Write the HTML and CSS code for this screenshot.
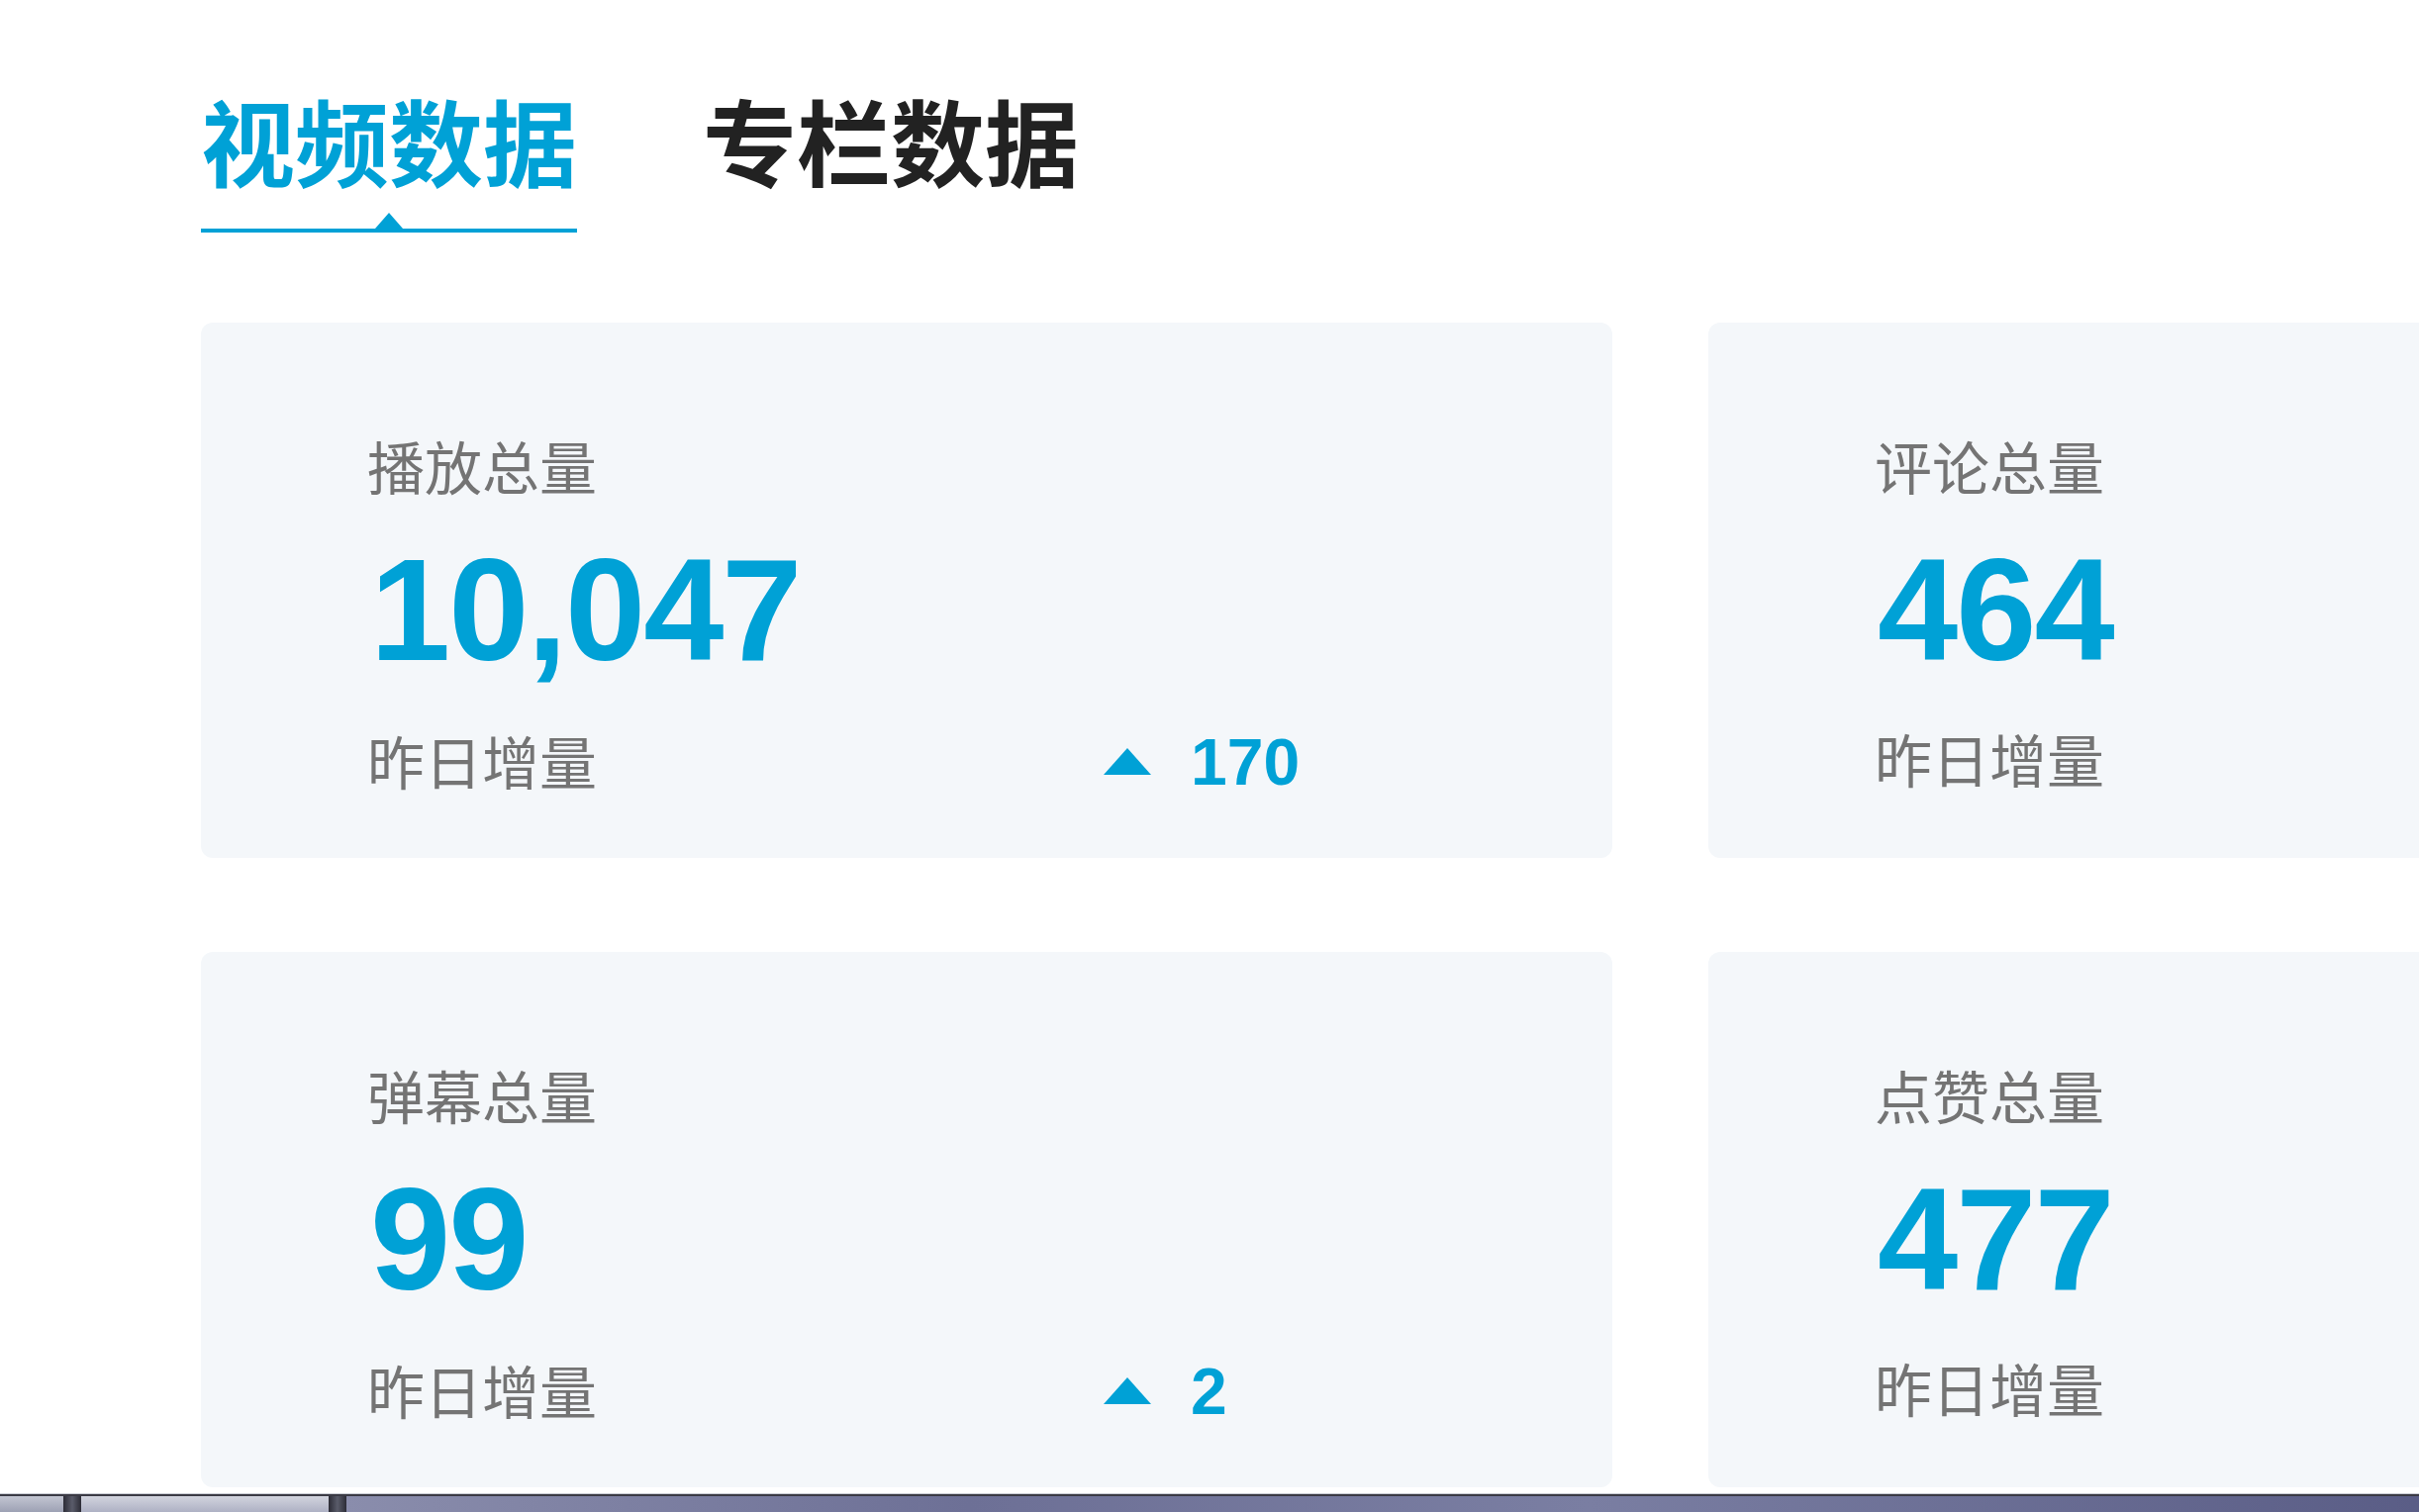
FILE: index.html
```html
<!DOCTYPE html>
<html lang="zh-CN">
<head>
<meta charset="utf-8">
<title>数据</title>
<link rel="stylesheet" href="styles.css">
</head>
<body>
<div class="page">
  <main class="content">
    <nav class="tabs">
      <div class="tab active">视频数据</div>
      <div class="tab">专栏数据</div>
    </nav>
    <section class="grid">
      <div class="card">
        <div class="label">播放总量</div>
        <div class="num">10,047</div>
        <div class="inc"><span class="inc-label">昨日增量</span><span class="tri"></span><span class="inc-val">170</span></div>
      </div>
      <div class="card">
        <div class="label">评论总量</div>
        <div class="num">464</div>
        <div class="inc"><span class="inc-label">昨日增量</span></div>
      </div>
      <div class="card">
        <div class="label">弹幕总量</div>
        <div class="num">99</div>
        <div class="inc"><span class="inc-label">昨日增量</span><span class="tri"></span><span class="inc-val">2</span></div>
      </div>
      <div class="card">
        <div class="label">点赞总量</div>
        <div class="num">477</div>
        <div class="inc"><span class="inc-label">昨日增量</span></div>
      </div>
    </section>
  </main>
  <div class="taskbar">
    <div class="tb-seg tb-a"></div>
    <div class="tb-sep"></div>
    <div class="tb-seg tb-b"></div>
    <div class="tb-sep"></div>
    <div class="tb-seg tb-c"></div>
  </div>
</div>
</body>
</html>
```
FILE: styles.css
```css
html, body {
  margin: 0;
  padding: 0;
  background: #ffffff;
}
body {
  font-family: "Noto Sans CJK SC", "Liberation Sans", sans-serif;
  overflow: hidden;
}
.page {
  width: 2444px;
  height: 1528px;
  display: flex;
  flex-direction: column;
  overflow: hidden;
}
.content {
  flex: 1;
  padding: 93px 0 0 203px;
  min-height: 0;
  overflow: hidden;
}
.tabs {
  display: flex;
  gap: 127px;
}
.tab {
  position: relative;
  font-size: 95px;
  font-weight: 700;
  line-height: 1;
  color: #222222;
  padding-bottom: 43px;
  border-bottom: 4px solid transparent;
}
.tab.active {
  color: #00a1d6;
  border-bottom-color: #00a1d6;
}
.tab.active::after {
  content: "";
  position: absolute;
  left: 50%;
  bottom: 0;
  transform: translateX(-50%);
  width: 0;
  height: 0;
  border-left: 14px solid transparent;
  border-right: 14px solid transparent;
  border-bottom: 16px solid #00a1d6;
}
.grid {
  margin-top: 91px;
  display: grid;
  grid-template-columns: 1426px 1426px;
  grid-auto-rows: 541px;
  column-gap: 97px;
  row-gap: 95px;
}
.card {
  background: #f4f7fa;
  border-radius: 12px;
  padding: 115px 0 0 168px;
  box-sizing: border-box;
}
.label {
  font-size: 58px;
  line-height: 1;
  color: #747474;
}
.num {
  margin: 45px 0 0 3px;
  font-family: "Liberation Sans", Arial, sans-serif;
  font-weight: 700;
  font-size: 146px;
  letter-spacing: -2px;
  line-height: 1;
  color: #00a1d6;
}
.inc {
  margin-top: 47px;
  font-size: 58px;
  line-height: 1;
  color: #747474;
  white-space: nowrap;
}
.inc-label {
  display: inline-block;
  width: 744px;
}
.tri {
  display: inline-block;
  width: 0;
  height: 0;
  border-left: 24px solid transparent;
  border-right: 24px solid transparent;
  border-bottom: 27px solid #00a1d6;
  vertical-align: 10px;
  margin-right: 40px;
}
.inc-val {
  font-family: "Liberation Sans", Arial, sans-serif;
  font-weight: 700;
  font-size: 66px;
  line-height: 1;
  color: #00a1d6;
}
.taskbar {
  height: 18px;
  flex: none;
  display: flex;
  border-top: 2px solid #3a3a44;
  box-shadow: 0 -1px 0 #c9ccd4;
  box-sizing: border-box;
  background: linear-gradient(#7d80a0, #4d5078);
}
.tb-seg {
  height: 100%;
}
.tb-a {
  width: 64px;
  background: linear-gradient(#c3c6d2, #9da1b4);
}
.tb-b {
  width: 250px;
  background: linear-gradient(#d2d4de, #aeb1c4);
}
.tb-c {
  flex: 1;
  background: linear-gradient(90deg, #8a8dac 0%, #6d7096 30%, #7a7ea2 60%, #5a5d86 100%);
}
.tb-sep {
  width: 18px;
  background: linear-gradient(90deg, #2c2c36, #5a5c6a 50%, #2c2c36);
}
```
